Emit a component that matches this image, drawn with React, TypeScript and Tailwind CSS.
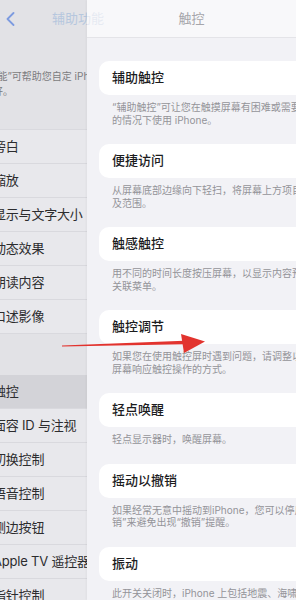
const sideRows = ["旁白", "缩放", "显示与文字大小", "动态效果", "朗读内容", "口述影像"];
const sideRows2 = ["触控", "面容 ID 与注视", "切换控制", "语音控制", "侧边按钮", "Apple TV 遥控器", "指针控制"];

const blocks: { title: string; lines: string[] }[] = [
  { title: "辅助触控", lines: ["“辅助触控”可让您在触摸屏幕有困难或需要自适应配件", "的情况下使用 iPhone。"] },
  { title: "便捷访问", lines: ["从屏幕底部边缘向下轻扫，将屏幕上方项目移到可触", "及范围。"] },
  { title: "触感触控", lines: ["用不同的时间长度按压屏幕，以显示内容预览、操作和相", "关联菜单。"] },
  { title: "触控调节", lines: ["如果您在使用触控屏时遇到问题，请调整以下设置来更改", "屏幕响应触控操作的方式。"] },
  { title: "轻点唤醒", lines: ["轻点显示器时，唤醒屏幕。"] },
  { title: "摇动以撤销", lines: ["如果经常无意中摇动到iPhone，您可以停用“摇动以撤", "销”来避免出现“撤销”提醒。"] },
  { title: "振动", lines: ["此开关关闭时，iPhone 上包括地震、海啸和其他紧急警报"] },
];

const SideRow = ({ label, active }: { label: string; active?: boolean }) => (
  <div
    className={`h-[34px] shrink-0 flex items-center border-b border-[#d9d9de] whitespace-nowrap ${
      active ? "bg-[#d3d3d8]" : "bg-[#e8e8ec]"
    }`}
  >
    <span className="ml-[-7px] text-[13px] tracking-[-0.2px] text-[#2c2c2e]">{label}</span>
  </div>
);

export default function App() {
  return (
    <div className="relative flex w-[296px] h-[600px] overflow-hidden font-[Inter,'Noto_Sans_CJK_SC',sans-serif]">
      {/* left list, dimmed */}
      <aside className="w-[87px] shrink-0 flex flex-col bg-[#e2e2e6]">
        <div className="h-[38px] shrink-0 flex items-center whitespace-nowrap">
          <svg width="9" height="14" viewBox="0 0 9 14" className="ml-[6px] shrink-0">
            <polyline points="7.5,1 1.5,7 7.5,13" fill="none" stroke="#7d9be0" strokeWidth="1.8" strokeLinecap="round" strokeLinejoin="round" />
          </svg>
          <span className="ml-[37px] text-[13px] text-[#b6c7de]">辅助功能</span>
        </div>
        <div className="mt-[31px] shrink-0 overflow-hidden text-[10px] leading-[15px] text-[#7c7c80] whitespace-nowrap">
          <div className="ml-[-37px]">“辅助功能”可帮助您自定 iPhone，使其适合您的</div>
          <div className="ml-[-37px]">需求偏好。</div>
        </div>
        <div className="mt-[30px] shrink-0 overflow-hidden border-t border-[#d9d9de]">
          {sideRows.map((r) => (
            <SideRow key={r} label={r} />
          ))}
        </div>
        <div className="h-[41px] shrink-0 bg-[#e2e2e6]" />
        <div className="shrink-0 overflow-hidden">
          {sideRows2.map((r, i) => (
            <SideRow key={r} label={r} active={i === 0} />
          ))}
        </div>
      </aside>

      {/* right detail */}
      <main className="relative flex-1 flex flex-col overflow-hidden shadow-[-1px_0_2px_rgba(0,0,0,0.04)]">
        <div className="h-[38px] shrink-0 flex items-center justify-center bg-[#f5f5f8]/75 border-b border-[#e4e4e8]">
          <span className="text-[13px] text-[#a6a6ab]">触控</span>
        </div>
        <div className="flex-1 pt-[23px] pl-[12px] flex flex-col bg-[#f2f2f6]">
          {blocks.map((b) => (
            <div key={b.title} className="mb-[18px] shrink-0">
              <div className="h-[34px] w-[240px] rounded-[10px] bg-white flex items-center pl-[13px]">
                <span className="text-[13px] font-medium text-[#1c1c1e]">{b.title}</span>
              </div>
              <div className="pt-[6px] pl-[13px] text-[10px] leading-[12.5px] text-[#949499] whitespace-nowrap">
                {b.lines.map((l) => (
                  <div key={l}>{l}</div>
                ))}
              </div>
            </div>
          ))}
        </div>
      </main>

      {/* red annotation arrow */}
      <svg className="absolute inset-0 pointer-events-none" width="296" height="600" viewBox="0 0 296 600">
        <polygon points="62,345.4 184,340.8 184,344.2 62,346.4" fill="#e2332e" />
        <polygon points="181,334 205,341.5 184,353" fill="#e2332e" />
      </svg>
    </div>
  );
}
